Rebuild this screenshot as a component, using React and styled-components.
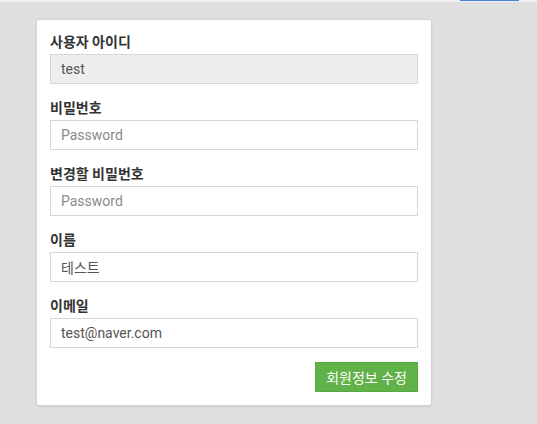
import React from 'react';
import styled, { createGlobalStyle } from 'styled-components';

const GlobalStyle = createGlobalStyle`
    body {
        margin: 0;
        background-color: #dfdfdf;
        font-family: Roboto, "Noto Sans CJK KR", sans-serif;
    }
`;

const TopStrip = styled.div`
    height: 2px;
    background-color: #efefef;
    display: flex;
    justify-content: flex-end;
    padding-right: 18px;
`;

const ActiveTab = styled.div`
    width: 59px;
    height: 1px;
    background-color: #4a7fd9;
`;

const Page = styled.div`
    padding: 17px 0 19px 36px;
`;

const Card = styled.form`
    width: 368px;
    padding: 12px 13px 13px 13px;
    background-color: white;
    border: 1px solid #d4d4d4;
    border-radius: 3px;
    box-shadow: 0 1px 2px rgba(0, 0, 0, 0.08);
    display: flex;
    flex-direction: column;
`;

const Group = styled.div`
    display: flex;
    flex-direction: column;
    margin-bottom: 14px;
`;

const Label = styled.label`
    font-size: 14px;
    font-weight: bold;
    line-height: 20px;
    color: #333;
    margin-bottom: 2px;
`;

const Input = styled.input`
    box-sizing: border-box;
    width: 100%;
    height: 30px;
    padding: 0 10px;
    font-family: Roboto, "Noto Sans CJK KR", sans-serif;
    font-size: 14px;
    color: #555;
    background-color: ${({ readOnly }) => (readOnly ? '#eeeeee' : 'white')};
    border: 1px solid #d6d6d6;
    border-radius: 0;
    outline: none;

    &::placeholder {
        color: #8a8a8a;
    }
`;

const Actions = styled.div`
    display: flex;
    justify-content: flex-end;
`;

const SubmitButton = styled.button`
    height: 30px;
    padding: 0 10px;
    background-color: #62b24a;
    border: 1px solid #58a843;
    color: white;
    font-family: Roboto, "Noto Sans CJK KR", sans-serif;
    font-size: 14px;
    cursor: pointer;
`;

const fields = [
    { label: '사용자 아이디', value: 'test', readOnly: true },
    { label: '비밀번호', placeholder: 'Password', type: 'password' },
    { label: '변경할 비밀번호', placeholder: 'Password', type: 'password' },
    { label: '이름', value: '테스트' },
    { label: '이메일', value: 'test@naver.com' },
];

export default function App() {
    return (
        <>
            <GlobalStyle />
            <TopStrip>
                <ActiveTab />
            </TopStrip>
            <Page>
                <Card onSubmit={(e) => e.preventDefault()}>
                    {fields.map((f) => (
                        <Group key={f.label}>
                            <Label>{f.label}</Label>
                            <Input
                                type={f.type || 'text'}
                                defaultValue={f.value}
                                placeholder={f.placeholder}
                                readOnly={f.readOnly}
                            />
                        </Group>
                    ))}
                    <Actions>
                        <SubmitButton type="submit">회원정보 수정</SubmitButton>
                    </Actions>
                </Card>
            </Page>
        </>
    );
}
